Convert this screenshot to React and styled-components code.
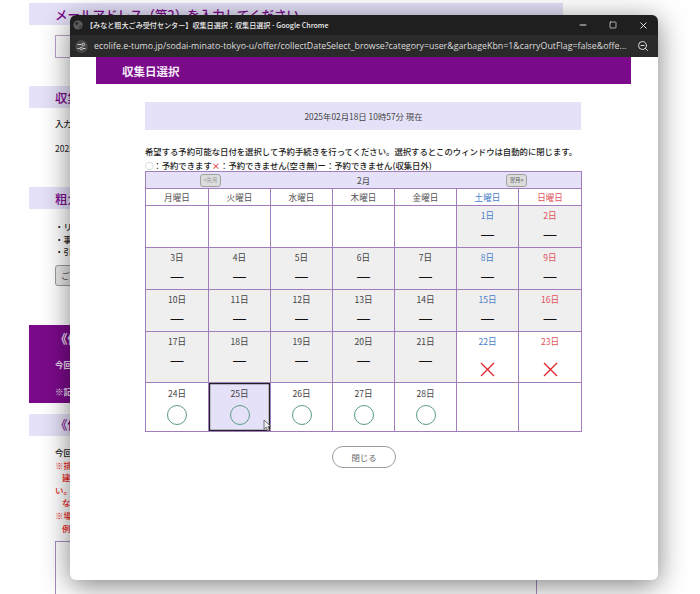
import styled, { createGlobalStyle } from 'styled-components';
import { Minus, Square, X, ZoomOut } from 'lucide-react';

const GlobalStyle = createGlobalStyle`
  html, body {
    margin: 0;
    height: 594px;
    overflow: hidden;
    background: #fff;
    font-family: "Noto Sans CJK JP", "Noto Sans", sans-serif;
  }
`;

const Stage = styled.div`
  position: relative;
  width: 700px;
  height: 594px;
  overflow: hidden;
`;

/* page behind the popup */
const BackPage = styled.div`
  width: 534px;
  margin-left: 29px;
  padding-top: 3px;
`;

const Band = styled.h2`
  display: flex;
  align-items: center;
  height: 22px;
  margin: ${p => p.$top || 0}px 0 0;
  padding-left: ${p => p.$indent || 26}px;
  background: #e4e1f8;
  color: #7b0a8a;
  font-size: 12.5px;
  font-weight: 500;
  white-space: nowrap;
  overflow: hidden;
`;

const BackInput = styled.div`
  width: 300px;
  height: 21px;
  margin: 10px 0 0 26px;
  border: 1px solid #b9a0cc;
`;

const BackText = styled.p`
  margin: ${p => p.$top || 0}px 0 0 ${p => p.$indent || 26}px;
  color: ${p => p.$color || '#222'};
  font-size: 8.5px;
  font-weight: ${p => p.$weight || 500};
  line-height: 12.6px;
  white-space: nowrap;
`;

const BackButton = styled.div`
  display: flex;
  align-items: center;
  width: 120px;
  height: 19px;
  margin: 7px 0 0 26px;
  padding-left: 5px;
  border: 1px solid #999;
  border-radius: 3px;
  background: #e8e8e8;
  color: #555;
  font-size: 8.5px;
`;

const Notice = styled.div`
  height: 78px;
  margin-top: 39px;
  padding-top: 4px;
  box-sizing: border-box;
  background: #7b0a8a;
  color: #efe4f4;
`;

const NoticeTitle = styled.div`
  padding-left: 26px;
  font-size: 12.5px;
  font-weight: 700;
  line-height: 20px;
`;

const BackBox = styled.div`
  width: 482px;
  height: 80px;
  margin: 7px 0 0 26px;
  box-sizing: border-box;
  border: 1px solid #a78cbc;
`;

/* chrome popup */
const Popup = styled.div`
  position: absolute;
  left: 70px;
  top: 15px;
  width: 588px;
  height: 565px;
  display: flex;
  flex-direction: column;
  border-radius: 6px;
  background: #fff;
  box-shadow: 0 5px 28px rgba(0, 0, 0, 0.5);
  overflow: hidden;
`;

const TitleBar = styled.div`
  flex: none;
  display: flex;
  align-items: center;
  height: 20px;
  padding-left: 3px;
  background: #1f1f1f;
  color: #ececec;
  font-size: 7.1px;
  font-weight: 500;
  white-space: nowrap;
`;

const PageTitle = styled.span`
  flex: 1;
  margin-left: 3px;
`;

const WinButton = styled.span`
  display: flex;
  align-items: center;
  justify-content: center;
  width: 30px;
  height: 20px;
  color: #f2f2f2;
`;

const UrlBar = styled.div`
  flex: none;
  display: flex;
  align-items: center;
  height: 22px;
  padding: 0 9px 0 5px;
  background: #2a2a2a;
  color: #dcdcdc;
  font-family: "Open Sans", sans-serif;
  font-size: 8.83px;
  white-space: nowrap;
`;

const TuneChip = styled.span`
  flex: none;
  display: flex;
  align-items: center;
  justify-content: center;
  width: 13px;
  height: 13px;
  border-radius: 50%;
  background: #474747;
`;

const UrlText = styled.span`
  flex: 1;
  margin-left: 6px;
`;

const Content = styled.div`
  flex: 1;
  display: flex;
  flex-direction: column;
  padding: 0 27px 0 26px;
`;

const Heading = styled.h1`
  height: 27px;
  margin: 0;
  padding-left: 26px;
  background: #7b0a8a;
  color: #f4ecf7;
  font-size: 11.5px;
  font-weight: 700;
  line-height: 28px;
`;

const Main = styled.div`
  width: 436px;
  margin: 18px 0 0 49px;
`;

const Now = styled.div`
  height: 28px;
  padding-left: 1px;
  background: #e4e1f8;
  color: #444;
  font-size: 8.4px;
  line-height: 29px;
  text-align: center;
`;

const Lead = styled.p`
  margin: 14px 0 0;
  color: #1c1c1c;
  font-size: 8.36px;
  font-weight: 500;
  line-height: 14px;
  white-space: nowrap;
`;

const LegendCircle = styled.span`
  color: #6f8fa0;
`;

const Cross = styled.span`
  color: #e0242c;
`;

const Calendar = styled.table`
  width: 436px;
  margin-top: -1px;
  table-layout: fixed;
  border-collapse: collapse;
  border: 1px solid #b094c8;

  td, th {
    padding: 0;
    border: 1px solid #a27cbc;
  }
`;

const Column = styled.col`
  width: ${p => p.$width}px;
`;

const MonthCell = styled.th`
  height: 16px;
  background: #e4e1f8;
  font-weight: 400;
`;

const MonthNav = styled.div`
  display: grid;
  grid-template-columns: 1fr 1fr 1fr;
  align-items: center;
  padding: 0 54px;
  color: #444;
  font-size: 8.4px;
`;

const NavButton = styled.span`
  justify-self: ${p => (p.$next ? 'end' : 'start')};
  width: 19px;
  height: 11px;
  border: 1px solid #a0a0a0;
  border-radius: 3px;
  background: #dcdcdc;
  color: ${p => (p.$next ? '#555' : '#999')};
  font-size: 5.4px;
  line-height: 11px;
  text-align: center;
`;

const DayName = styled.th`
  height: 16px;
  background: #fff;
  color: ${p => p.$color || '#555'};
  font-size: 8.6px;
  font-weight: 400;
`;

const Cell = styled.td`
  position: relative;
  height: ${p => p.$height}px;
  background: ${p => (p.$selected ? '#e4e1f8' : p.$closed ? '#efefef' : '#fff')};
  text-align: center;
  vertical-align: top;
  box-shadow: ${p => (p.$selected ? 'inset 0 0 0 1.2px #222' : 'none')};
`;

const DayLabel = styled.div`
  margin-top: ${p => p.$top}px;
  color: ${p => p.$color || '#444'};
  font-size: 8.6px;
  line-height: 13px;
`;

const Dash = styled.div`
  margin-top: 4px;
  color: #111;
  font-family: "Liberation Sans", sans-serif;
  font-size: 13px;
  line-height: 18px;
`;

const OpenMark = styled.div`
  width: 18px;
  height: 18px;
  margin: 5px auto 0;
  border: 1px solid #5d9a86;
  border-radius: 50%;
`;

const CrossMark = styled.svg`
  display: block;
  width: 15px;
  height: 15px;
  margin: 14px auto 0;
`;

const Pointer = styled.svg`
  position: absolute;
  right: -2px;
  bottom: -1px;
  width: 9px;
  height: 13px;
`;

const CloseButton = styled.button`
  align-self: center;
  width: 64px;
  height: 22px;
  margin: 14px 0 0 1px;
  padding: 0;
  border: 1px solid #9c9c9c;
  border-radius: 11px;
  background: #fff;
  color: #666;
  font-family: inherit;
  font-size: 8.4px;
`;

const days = [
  { name: '月曜日', width: 63 },
  { name: '火曜日', width: 62 },
  { name: '水曜日', width: 62 },
  { name: '木曜日', width: 62 },
  { name: '金曜日', width: 62 },
  { name: '土曜日', width: 62, color: '#4a80c8' },
  { name: '日曜日', width: 63, color: '#e0525a' },
];

const weeks = [
  { height: 41, cells: [null, null, null, null, null, [1, 'dash'], [2, 'dash']] },
  { height: 41, cells: [[3, 'dash'], [4, 'dash'], [5, 'dash'], [6, 'dash'], [7, 'dash'], [8, 'dash'], [9, 'dash']] },
  { height: 41, cells: [[10, 'dash'], [11, 'dash'], [12, 'dash'], [13, 'dash'], [14, 'dash'], [15, 'dash'], [16, 'dash']] },
  { height: 50, cells: [[17, 'dash'], [18, 'dash'], [19, 'dash'], [20, 'dash'], [21, 'dash'], [22, 'full'], [23, 'full']] },
  { height: 48, top: 4, cells: [[24, 'open'], [25, 'open'], [26, 'open'], [27, 'open'], [28, 'open'], null, null] },
];

const Mark = ({ type }) => {
  if (type === 'dash') return <Dash>—</Dash>;
  if (type === 'open') return <OpenMark />;
  return (
    <CrossMark viewBox="0 0 15 15">
      <path d="M1 1 L14 14 M14 1 L1 14" stroke="#e0242c" strokeWidth="1.3" fill="none" />
    </CrossMark>
  );
};

const GlobeIcon = () => (
  <svg width="10" height="10" viewBox="0 0 10 10">
    <circle cx="5" cy="5" r="4.6" fill="#5c5c5c" />
    <path d="M2 2.5 L5 2 L5.5 4 L3 5.5 Z M6 6 L8.5 5.5 L7 8.5 Z" fill="#2c2c2c" />
  </svg>
);

const TuneIcon = () => (
  <svg width="9" height="9" viewBox="0 0 9 9" fill="none" stroke="#ddd" strokeWidth="0.9">
    <path d="M0.5 2.5 H4.5 M0.5 6.5 H2.5 M6 6.5 H8.5" />
    <circle cx="6.3" cy="2.5" r="1.3" />
    <circle cx="4.3" cy="6.5" r="1.3" />
  </svg>
);

export default function App() {
  return (
    <Stage>
      <GlobalStyle />
      <BackPage>
        <Band>メールアドレス（第2）を入力してください</Band>
        <BackInput />
        <Band $top={28}>収集日を選択してください</Band>
        <BackText $top={9}>入力内容</BackText>
        <BackText $top={12} $weight={400}>2025年</BackText>
        <Band $top={33}>粗大ごみの出し方</Band>
        <BackText $top={11}>・リサイクル</BackText>
        <BackText>・事前</BackText>
        <BackText>・引取</BackText>
        <BackButton>ごみ</BackButton>
        <Notice>
          <NoticeTitle>《個人情報》</NoticeTitle>
          <BackText $top={9} $color="#efe4f4" $weight={700}>今回</BackText>
          <BackText $top={14} $color="#efe4f4" $weight={700}>※記入</BackText>
        </Notice>
        <Band $top={11}>《備考》</Band>
        <BackText $top={10}>今回</BackText>
        <BackText $color="#f01c1c">※排出</BackText>
        <BackText $color="#f01c1c" $indent={33}>建物</BackText>
        <BackText $color="#f01c1c">い。</BackText>
        <BackText $color="#f01c1c" $indent={33}>など</BackText>
        <BackText $color="#f01c1c">※場所</BackText>
        <BackText $color="#f01c1c" $indent={33}>例</BackText>
        <BackBox />
      </BackPage>

      <Popup>
        <TitleBar>
          <GlobeIcon />
          <PageTitle>【みなと粗大ごみ受付センター】収集日選択：収集日選択 - Google Chrome</PageTitle>
          <WinButton><Minus size={10} strokeWidth={2.2} /></WinButton>
          <WinButton><Square size={8} strokeWidth={2} /></WinButton>
          <WinButton><X size={11} strokeWidth={2} /></WinButton>
        </TitleBar>
        <UrlBar>
          <TuneChip><TuneIcon /></TuneChip>
          <UrlText>ecolife.e-tumo.jp/sodai-minato-tokyo-u/offer/collectDateSelect_browse?category=user&amp;garbageKbn=1&amp;carryOutFlag=false&amp;offe...</UrlText>
          <ZoomOut size={12} strokeWidth={2} />
        </UrlBar>
        <Content>
          <Heading>収集日選択</Heading>
          <Main>
            <Now>2025年02月18日 10時57分 現在</Now>
            <Lead>
              希望する予約可能な日付を選択して予約手続きを行ってください。選択するとこのウィンドウは自動的に閉じます。
              <br />
              <LegendCircle>◯</LegendCircle>：予約できます<Cross>×</Cross>：予約できません(空き無)ー：予約できません(収集日外)
            </Lead>
            <Calendar>
              <colgroup>
                {days.map(d => (
                  <Column key={d.name} $width={d.width} />
                ))}
              </colgroup>
              <thead>
                <tr>
                  <MonthCell colSpan={7}>
                    <MonthNav>
                      <NavButton>&lt;先月</NavButton>
                      <span>2月</span>
                      <NavButton $next>翌月&gt;</NavButton>
                    </MonthNav>
                  </MonthCell>
                </tr>
                <tr>
                  {days.map(d => (
                    <DayName key={d.name} $color={d.color}>{d.name}</DayName>
                  ))}
                </tr>
              </thead>
              <tbody>
                {weeks.map((week, w) => (
                  <tr key={w}>
                    {week.cells.map((cell, i) => (
                      <Cell
                        key={i}
                        $height={week.height}
                        $closed={cell && cell[1] === 'dash'}
                        $selected={cell && cell[0] === 25}
                      >
                        {cell && <DayLabel $top={week.top || 3} $color={days[i].color}>{cell[0]}日</DayLabel>}
                        {cell && <Mark type={cell[1]} />}
                        {cell && cell[0] === 25 && (
                          <Pointer viewBox="0 0 9 13">
                            <path d="M1 1 L1 10 L3.2 8.2 L4.8 12 L6.4 11.2 L4.9 7.6 L7.8 7.4 Z" fill="#eee" stroke="#555" strokeWidth="0.8" />
                          </Pointer>
                        )}
                      </Cell>
                    ))}
                  </tr>
                ))}
              </tbody>
            </Calendar>
          </Main>
          <CloseButton>閉じる</CloseButton>
        </Content>
      </Popup>
    </Stage>
  );
}
